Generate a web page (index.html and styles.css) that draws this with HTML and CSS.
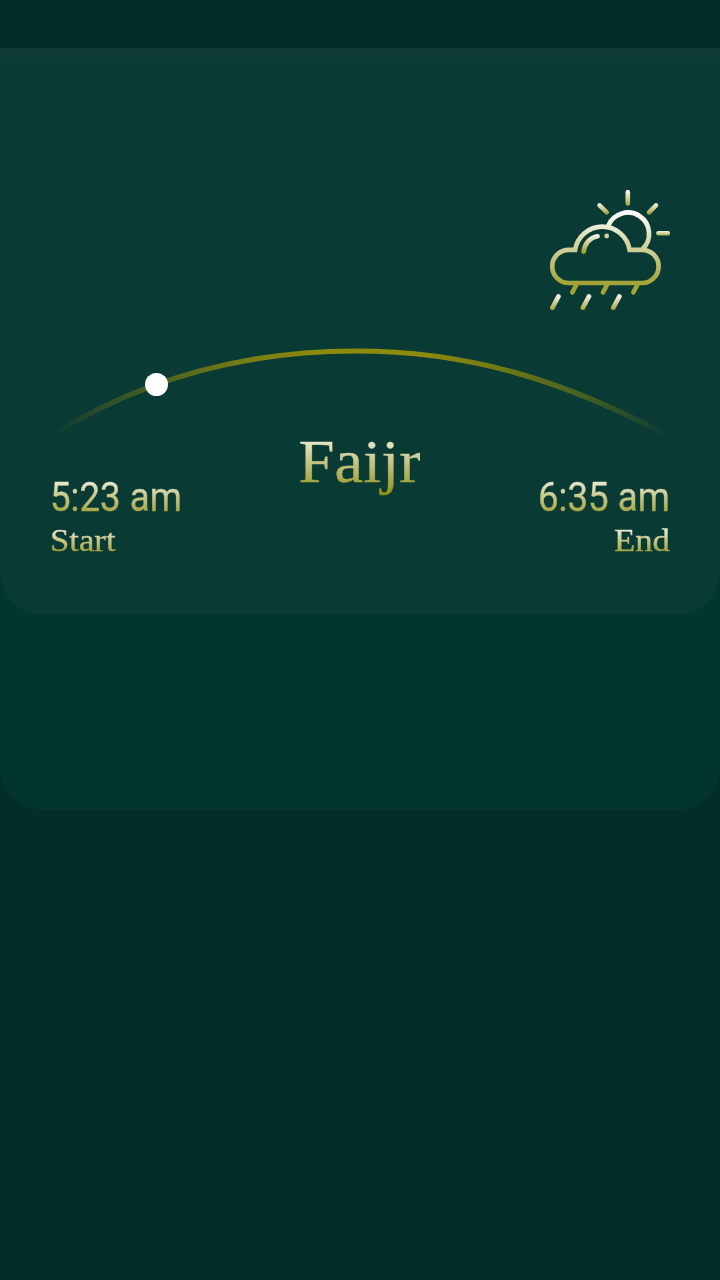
FILE: index.html
```html
<!DOCTYPE html>
<html lang="en">
<head>
<meta charset="utf-8">
<title>Faijr</title>
<link rel="stylesheet" href="styles.css">
</head>
<body>
<main class="backdrop">
  <section class="card">
    <svg class="weather" viewBox="10 10 120 120" fill="none" stroke-width="4.7" stroke-linecap="round">
      <defs>
        <linearGradient id="sky" gradientUnits="userSpaceOnUse" x1="0" y1="32" x2="0" y2="103"><stop stop-color="#fff"/><stop offset="1" stop-color="#a3a338"/></linearGradient>
        <linearGradient id="ray" gradientUnits="userSpaceOnUse" x1="0" y1="10" x2="0" y2="26"><stop stop-color="#fff"/><stop offset="1" stop-color="#a3a338"/></linearGradient>
        <linearGradient id="side" gradientUnits="userSpaceOnUse" x1="0" y1="22" x2="0" y2="34"><stop stop-color="#fff"/><stop offset="1" stop-color="#a3a338"/></linearGradient>
        <linearGradient id="flat" gradientUnits="userSpaceOnUse" x1="0" y1="50.5" x2="0" y2="56"><stop stop-color="#fff"/><stop offset="1" stop-color="#a3a338"/></linearGradient>
        <linearGradient id="shine" gradientUnits="userSpaceOnUse" x1="0" y1="53" x2="0" y2="74"><stop stop-color="#fff"/><stop offset="1" stop-color="#999922"/></linearGradient>
        <linearGradient id="rain" gradientUnits="userSpaceOnUse" x1="0" y1="114" x2="0" y2="130"><stop stop-color="#fff"/><stop offset="1" stop-color="#a3a338"/></linearGradient>
      </defs>
      <g stroke="url(#sky)">
        <path stroke-linecap="butt" d="M68.3 45.6A21.2 21.2 0 1 1 102.6 69"/>
        <path d="M28.8 103a16.6 16.6 0 0 1 0-33.2h6.3A27.6 27.6 0 0 1 89.6 69.8H102a16.6 16.6 0 0 1 0 33.2Z"/>
      </g>
      <path stroke="url(#ray)" stroke-width="4.6" d="M87.8 12.2V23.5"/>
      <path stroke="url(#side)" stroke-width="4.5" d="M59.5 25.3l7.3 7M116 25.3l-7 7"/>
      <path stroke="url(#flat)" stroke-width="4.6" d="M118.4 53.3h9.4"/>
      <path stroke="url(#shine)" stroke-width="4.6" d="M43.6 71.8C44.5 63.5 50 57.5 57.6 56.3"/>
      <circle cx="66.7" cy="56" r="2.4" fill="#d2d1a0"/>
      <path stroke="#a3a338" stroke-width="4.6" d="M36.3 105l-4 7.4M67 105l-4 7.4M97.3 105l-4 7.4"/>
      <path stroke="url(#rain)" stroke-width="4.6" d="M18.5 116.4l-6.2 11.4M49 116.4l-6.2 11.4M79.4 116.4l-6.2 11.4"/>
    </svg>
    <svg class="arc" viewBox="50 340 620 100" fill="none">
      <defs>
        <linearGradient id="fade" gradientUnits="userSpaceOnUse" x1="50" y1="0" x2="669" y2="0">
          <stop stop-color="#8d8b0c" stop-opacity="0"/><stop offset=".16" stop-color="#8d8b0c" stop-opacity=".46"/><stop offset=".32" stop-color="#8d8b0c" stop-opacity=".84"/><stop offset=".44" stop-color="#8d8b0c"/><stop offset=".6" stop-color="#8d8b0c"/><stop offset=".7" stop-color="#8d8b0c" stop-opacity=".84"/><stop offset=".86" stop-color="#8d8b0c" stop-opacity=".46"/><stop offset="1" stop-color="#8d8b0c" stop-opacity="0"/>
        </linearGradient>
      </defs>
      <path stroke="url(#fade)" stroke-width="5.2" d="M51 435.5C142 379 245 351 356 351C470 351 565 381 669 436"/>
      <circle cx="156.5" cy="384.5" r="11.5" fill="#fff"/>
    </svg>
    <div class="times">
      <div class="side">
        <span class="gold time">5:23 am</span>
        <span class="gold label">Start</span>
      </div>
      <h1 class="gold prayer">Faijr</h1>
      <div class="side side-end">
        <span class="gold time">6:35 am</span>
        <span class="gold label">End</span>
      </div>
    </div>
  </section>
</main>
</body>
</html>
```
FILE: styles.css
```css
* { box-sizing: border-box; }
body { margin: 0; min-height: 1280px; padding-top: 48px; background: #022e2a; }
.backdrop { height: 762px; background: #03352f; border-radius: 0 0 43px 43px; }
.card {
  height: 567px;
  padding: 142px 50px 0;
  display: flex;
  flex-direction: column;
  background: linear-gradient(#0e3b36, #0a3a34 30px);
  border-radius: 0 0 43px 43px;
}
.weather { width: 120px; height: 120px; align-self: flex-end; }
.arc { width: 620px; height: 100px; margin-top: 30px; }
.times { display: grid; grid-template-columns: 1fr auto 1fr; align-items: start; margin-top: -14px; }
.gold {
  color: transparent;
  background: linear-gradient(#fff, #8b8b0b);
  -webkit-background-clip: text;
  background-clip: text;
  -webkit-text-stroke: .4px transparent;
}
.side { display: flex; flex-direction: column; align-items: flex-start; padding-top: 46px; }
.side-end { align-items: flex-end; }
.time {
  font: 400 40px/52px Roboto, sans-serif;
  white-space: nowrap;
  transform: scaleX(.917);
  transform-origin: left;
}
.side-end .time { transform-origin: right; }
.label {
  font: 400 31px/36px "Liberation Serif", serif;
  margin-top: -1px;
  transform: scaleX(1.12);
  transform-origin: left;
}
.side-end .label { transform-origin: right; }
.prayer {
  margin: 0;
  font: 400 61px/72px "Liberation Serif", serif;
  transform: scaleX(1.06);
}
```
